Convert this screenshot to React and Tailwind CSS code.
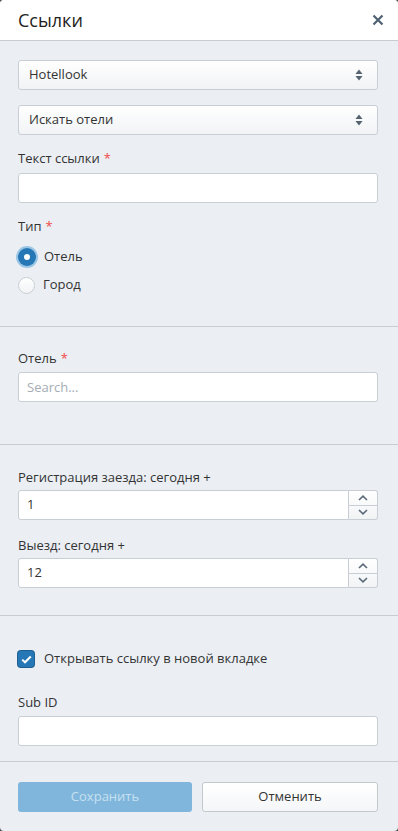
import React, { useState } from "react";

const font = { fontFamily: '"Open Sans", "Noto Sans", sans-serif' };

const SelectBox = ({ value, className = "" }) => (
  <div
    className={`flex h-[30px] items-center justify-between rounded-[3px] border border-[#c9ced4] bg-gradient-to-b from-white to-[#f1f3f5] pl-[10px] pr-[14px] text-[13px] text-[#333] ${className}`}
  >
    <span>{value}</span>
    <svg width="8" height="12" viewBox="0 0 8 12">
      <path d="M4 0.5 L7.5 5 H0.5 Z" fill="#556270" />
      <path d="M4 11.5 L7.5 7 H0.5 Z" fill="#556270" />
    </svg>
  </div>
);

const Label = ({ children, required, className = "" }) => (
  <div className={`h-[20px] text-[13px] leading-[20px] text-[#333] ${className}`}>
    {children}
    {required && <span className="ml-[4px] text-[#f04848]">*</span>}
  </div>
);

const TextInput = ({ placeholder, className = "" }) => (
  <input
    className={`block h-[30px] w-full rounded-[3px] border border-[#c9ced4] bg-white px-[8px] text-[13px] text-[#333] outline-none placeholder:text-[#a5adb5] ${className}`}
    placeholder={placeholder}
    style={font}
  />
);

const NumberInput = ({ value, className = "" }) => (
  <div className={`flex h-[30px] ${className}`}>
    <div className="flex flex-1 items-center rounded-l-[3px] border border-[#c9ced4] bg-white px-[8px] text-[13px] text-[#333]">
      {value}
    </div>
    <div className="flex w-[29px] flex-col rounded-r-[3px] border border-l-0 border-[#c9ced4] bg-gradient-to-b from-white to-[#f1f3f5]">
      <div className="flex flex-1 items-center justify-center border-b border-[#c9ced4]">
        <svg width="10" height="6" viewBox="0 0 10 6">
          <path d="M1 5 L5 1.2 L9 5" fill="none" stroke="#5a6978" strokeWidth="1.6" />
        </svg>
      </div>
      <div className="flex flex-1 items-center justify-center">
        <svg width="10" height="6" viewBox="0 0 10 6">
          <path d="M1 1 L5 4.8 L9 1" fill="none" stroke="#5a6978" strokeWidth="1.6" />
        </svg>
      </div>
    </div>
  </div>
);

const Radio = ({ checked, label, className = "" }) => (
  <div className={`flex h-[20px] items-center ${className}`}>
    {checked ? (
      <span className="flex h-[18px] w-[18px] items-center justify-center rounded-full bg-[#2677b5] ring-[2px] ring-[#9ac6e6]">
        <span className="h-[6px] w-[6px] rounded-full bg-white" />
      </span>
    ) : (
      <span className="h-[17px] w-[17px] rounded-full border border-[#c9ced4] bg-gradient-to-b from-white to-[#f1f3f5]" />
    )}
    <span className="ml-[8px] text-[13px] text-[#333]">{label}</span>
  </div>
);

export default function App() {
  const [openNew] = useState(true);

  return (
    <div className="min-h-screen bg-[#4a4a4a]" style={font}>
      <div className="flex min-h-[831px] flex-col overflow-hidden rounded-[4px] bg-[#ebeff3]">
        <div className="flex h-[41px] items-center justify-between border-b border-[#c9cdd2] bg-white pl-[18px] pr-[14px]">
          <h1 className="text-[18px] font-normal text-[#222]">Ссылки</h1>
          <svg width="12" height="12" viewBox="0 0 12 12">
            <path d="M1.5 1.5 L10.5 10.5 M10.5 1.5 L1.5 10.5" stroke="#4f6172" strokeWidth="2.2" />
          </svg>
        </div>

        <div className="border-b border-[#c9cdd2] pb-[31px] pl-[18px] pr-[20px] pt-[19px]">
          <SelectBox value="Hotellook" />
          <SelectBox value="Искать отели" className="mt-[15px]" />
          <Label required className="mt-[13px]">Текст ссылки</Label>
          <TextInput className="mt-[5px]" />
          <Label required className="mt-[13px]">Тип</Label>
          <Radio checked label="Отель" className="mt-[11px]" />
          <Radio label="Город" className="mt-[8px]" />
        </div>

        <div className="border-b border-[#c9cdd2] pb-[42px] pl-[18px] pr-[20px] pt-[21px]">
          <Label required>Отель</Label>
          <TextInput placeholder="Search..." className="mt-[4px]" />
        </div>

        <div className="border-b border-[#c9cdd2] pb-[27px] pl-[18px] pr-[20px] pt-[22px]">
          <Label>Регистрация заезда: сегодня +</Label>
          <NumberInput value="1" className="mt-[3px]" />
          <Label className="mt-[15px]">Выезд: сегодня +</Label>
          <NumberInput value="12" className="mt-[3px]" />
        </div>

        <div className="border-b border-[#c9cdd2] pb-[15px] pl-[18px] pr-[20px] pt-[33px]">
          <div className="flex h-[20px] items-center">
            <span className="flex h-[16px] w-[16px] items-center justify-center rounded-[3px] bg-[#2677b5] ring-1 ring-[#1d5f92]">
              {openNew && (
                <svg width="11" height="9" viewBox="0 0 11 9">
                  <path d="M1.2 4.6 L4 7.3 L9.8 1.5" fill="none" stroke="white" strokeWidth="2" />
                </svg>
              )}
            </span>
            <span className="ml-[10px] text-[13px] text-[#333]">Открывать ссылку в новой вкладке</span>
          </div>
          <Label className="mt-[23px]">Sub ID</Label>
          <TextInput className="mt-[4px]" />
        </div>

        <div className="flex gap-[10px] pl-[18px] pr-[20px] pt-[20px]">
          <button className="h-[30px] flex-1 rounded-[3px] bg-[#80b6db] text-[13px] text-[#c6e0f1]">
            Сохранить
          </button>
          <button className="h-[30px] flex-1 rounded-[3px] border border-[#c3c8cd] bg-gradient-to-b from-white to-[#f5f6f8] text-[13px] text-[#333]">
            Отменить
          </button>
        </div>
      </div>
    </div>
  );
}
